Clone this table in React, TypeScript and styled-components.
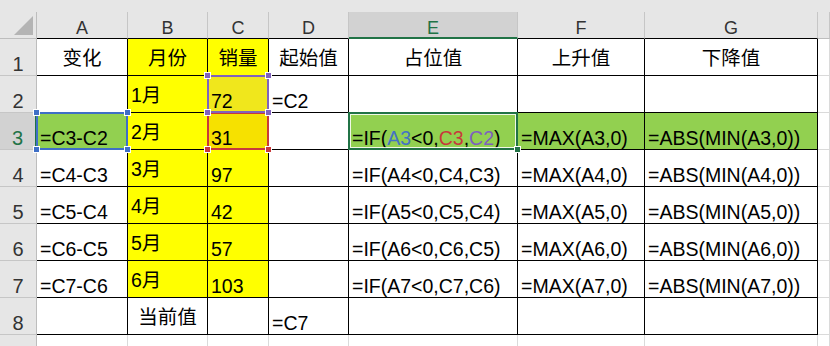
import React from 'react';
import styled, { createGlobalStyle } from 'styled-components';

const GREEN = '#217346';
const YELLOW = '#ffff00';
const LEAF = '#92d050';

const GlobalStyle = createGlobalStyle`
  *, *::before, *::after { box-sizing: border-box; }
  html, body { margin: 0; padding: 0; background: #fff; }
`;

const Sheet = styled.div`
  display: grid;
  grid-template-columns: 37px 91px 80px 61px 80px 169px 127px 173px 1fr;
  grid-template-rows: 12px 27px repeat(9, 37px);
  width: 830px;
  height: 346px;
  overflow: hidden;
  font-family: 'Liberation Sans', 'Noto Sans CJK SC', sans-serif;
  color: #000;
`;

const TopStrip = styled.div`
  grid-column: 1 / -1;
  background: #e6e6e6;
`;

const Corner = styled.div`
  display: flex;
  justify-content: flex-end;
  align-items: flex-end;
  padding: 0 3px 3px 0;
  background: #e6e6e6;
  border-right: 1px solid #bdbdbd;
  border-bottom: 1px solid #bdbdbd;
`;

const Triangle = styled.div`
  width: 19px;
  height: 19px;
  background: #b4b4b4;
  clip-path: polygon(100% 0, 100% 100%, 0 100%);
`;

const ColHeader = styled.div<{ $active?: boolean; $edge: 'table' | 'grid' }>`
  display: flex;
  justify-content: center;
  align-items: flex-end;
  padding-bottom: ${(p) => (p.$active ? 0 : 1)}px;
  font-size: 18px;
  line-height: 18px;
  background: ${(p) => (p.$active ? '#d2d2d2' : '#e6e6e6')};
  color: ${(p) => (p.$active ? GREEN : '#333')};
  border-right: 1px solid #c6c6c6;
  border-bottom: ${(p) =>
    p.$active ? `2px solid ${GREEN}` : p.$edge === 'table' ? '1px solid #000' : '1px solid #bdbdbd'};
`;

const RowHeader = styled.div<{ $active?: boolean }>`
  display: flex;
  justify-content: center;
  align-items: flex-end;
  padding-bottom: 1px;
  font-size: 20px;
  line-height: 20px;
  background: ${(p) => (p.$active ? '#d2d2d2' : '#e6e6e6')};
  color: ${(p) => (p.$active ? GREEN : '#333')};
  border-right: ${(p) => (p.$active ? `2px solid ${GREEN}` : '1px solid #bdbdbd')};
  border-bottom: 1px solid #c6c6c6;
`;

const Cell = styled.div<{
  $fill?: string;
  $grid?: boolean;
  $align?: 'left' | 'center';
  $valign?: 'center' | 'bottom';
}>`
  position: relative;
  display: flex;
  justify-content: ${(p) => (p.$align === 'center' ? 'center' : 'flex-start')};
  align-items: ${(p) => (p.$valign === 'center' ? 'center' : 'flex-end')};
  padding: ${(p) => (p.$valign === 'center' ? '1px 3px 0' : '0 3px 1px')};
  font-size: 19.5px;
  line-height: 20px;
  white-space: nowrap;
  background: ${(p) => p.$fill ?? '#fff'};
  border-right: 1px solid ${(p) => (p.$grid ? '#dadada' : '#000')};
  border-bottom: 1px solid ${(p) => (p.$grid ? '#dadada' : '#000')};
`;

const Ring = styled.div<{ $color: string; $z: number }>`
  position: absolute;
  inset: -1px;
  border: 2px solid ${(p) => p.$color};
  z-index: ${(p) => p.$z};
  pointer-events: none;
`;

const ActiveRing = styled(Ring)`
  box-shadow: inset 0 0 0 1px rgba(255, 255, 255, 0.85);
`;

const Knob = styled.div<{ $color: string; $x: 'left' | 'right'; $y: 'top' | 'bottom' }>`
  position: absolute;
  width: 7px;
  height: 7px;
  background: ${(p) => p.$color};
  border: 1px solid #fff;
  ${(p) => p.$x}: -5px;
  ${(p) => p.$y}: -5px;
`;

const Ref = styled.span<{ $c: string }>`
  color: ${(p) => p.$c};
`;

const RefBox: React.FC<{ color: string; z: number }> = ({ color, z }) => (
  <Ring $color={color} $z={z}>
    <Knob $color={color} $x="left" $y="top" />
    <Knob $color={color} $x="right" $y="top" />
    <Knob $color={color} $x="left" $y="bottom" />
    <Knob $color={color} $x="right" $y="bottom" />
  </Ring>
);

const ActiveBox: React.FC = () => (
  <ActiveRing $color={GREEN} $z={4}>
    <Knob $color={GREEN} $x="right" $y="bottom" />
  </ActiveRing>
);

interface CellDef {
  value?: React.ReactNode;
  fill?: string;
  align?: 'left' | 'center';
  valign?: 'center' | 'bottom';
  overlay?: React.ReactNode;
}

const COLUMNS = ['A', 'B', 'C', 'D', 'E', 'F', 'G'];
const SALES = [72, 31, 97, 42, 57, 103];

const title = (value: string, fill?: string): CellDef => ({ value, fill, align: 'center', valign: 'center' });

const buildRows = (): CellDef[][] => {
  const rows: CellDef[][] = [];
  rows.push([
    title('变化'),
    title('月份', YELLOW),
    title('销量', YELLOW),
    title('起始值'),
    title('占位值'),
    title('上升值'),
    title('下降值'),
  ]);

  SALES.forEach((qty, i) => {
    const r = i + 2;
    const hot = r === 3;
    const qtyFill = r === 2 ? '#f0e71c' : r === 3 ? '#f6e100' : YELLOW;
    const placeholder: React.ReactNode = hot ? (
      <span>
        =IF(<Ref $c="#4472c4">A3</Ref>&lt;0,<Ref $c="#c8393b">C3</Ref>,<Ref $c="#7e5fbf">C2</Ref>)
      </span>
    ) : r === 2 ? '' : `=IF(A${r}<0,C${r},C${r - 1})`;

    rows.push([
      {
        value: r === 2 ? '' : `=C${r}-C${r - 1}`,
        fill: hot ? LEAF : undefined,
        overlay: hot ? <RefBox color="#3f6fc6" z={2} /> : null,
      },
      { value: `${i + 1}月`, fill: YELLOW, valign: 'center' },
      {
        value: qty,
        fill: qtyFill,
        overlay: r === 2 ? <RefBox color="#8062bd" z={3} /> : hot ? <RefBox color="#c8393b" z={2} /> : null,
      },
      { value: r === 2 ? '=C2' : '' },
      { value: placeholder, fill: hot ? LEAF : undefined, overlay: hot ? <ActiveBox /> : null },
      { value: r === 2 ? '' : `=MAX(A${r},0)`, fill: hot ? LEAF : undefined },
      { value: r === 2 ? '' : `=ABS(MIN(A${r},0))`, fill: hot ? LEAF : undefined },
    ]);
  });

  rows.push([{}, title('当前值'), {}, { value: '=C7' }, {}, {}, {}]);
  return rows;
};

const App: React.FC = () => {
  const rows = buildRows();
  return (
    <>
      <GlobalStyle />
      <Sheet>
        <TopStrip />
        <Corner>
          <Triangle />
        </Corner>
        {COLUMNS.map((c) => (
          <ColHeader key={c} $active={c === 'E'} $edge="table">
            {c}
          </ColHeader>
        ))}
        <ColHeader $edge="grid" />

        {rows.map((cells, i) => (
          <React.Fragment key={i}>
            <RowHeader $active={i === 2}>{i + 1}</RowHeader>
            {cells.map((cell, j) => (
              <Cell key={j} $fill={cell.fill} $align={cell.align} $valign={cell.valign}>
                {cell.value}
                {cell.overlay}
              </Cell>
            ))}
            <Cell $grid />
          </React.Fragment>
        ))}

        <RowHeader>9</RowHeader>
        {COLUMNS.map((c) => (
          <Cell key={c} $grid />
        ))}
        <Cell $grid />
      </Sheet>
    </>
  );
};

export default App;
